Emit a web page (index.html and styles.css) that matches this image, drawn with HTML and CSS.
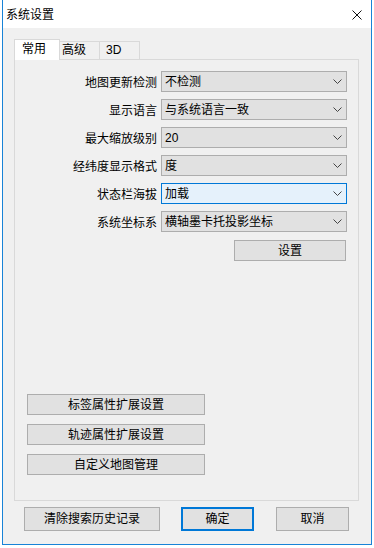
FILE: index.html
```html
<!DOCTYPE html>
<html>
<head>
  <meta name="viewport" content="width=device-width, initial-scale=1.0">
  <title>系统设置</title>
  <link rel="stylesheet" href="styles.css">
</head>
<body>

  <div class="window">
    <div class="titlebar">
      <span class="title">系统设置</span>
      <svg class="close" width="10" height="10" viewBox="0 0 10 10">
        <path d="M0.5 0.5 L9.5 9.5 M9.5 0.5 L0.5 9.5" stroke="#111" stroke-width="1" fill="none"/>
      </svg>
    </div>

    <div class="client">
      <!-- tabs -->
      <div class="tabs">
        <div class="tab active">常用</div>
        <div class="tab t2">高级</div>
        <div class="tab t3">3D</div>
      </div>

      <div class="panel">
        <div class="form">
          <div class="row">
            <span class="label">地图更新检测</span>
            <div class="combo"><span class="val">不检测</span><svg class="arrow" width="9" height="5"><polyline points="0.5,0.5 4.5,4.5 8.5,0.5" fill="none" stroke="#444"/></svg></div>
          </div>
          <div class="row">
            <span class="label">显示语言</span>
            <div class="combo"><span class="val">与系统语言一致</span><svg class="arrow" width="9" height="5"><polyline points="0.5,0.5 4.5,4.5 8.5,0.5" fill="none" stroke="#444"/></svg></div>
          </div>
          <div class="row">
            <span class="label">最大缩放级别</span>
            <div class="combo"><span class="val">20</span><svg class="arrow" width="9" height="5"><polyline points="0.5,0.5 4.5,4.5 8.5,0.5" fill="none" stroke="#444"/></svg></div>
          </div>
          <div class="row">
            <span class="label">经纬度显示格式</span>
            <div class="combo"><span class="val">度</span><svg class="arrow" width="9" height="5"><polyline points="0.5,0.5 4.5,4.5 8.5,0.5" fill="none" stroke="#444"/></svg></div>
          </div>
          <div class="row">
            <span class="label">状态栏海拔</span>
            <div class="combo focus"><span class="val">加载</span><svg class="arrow" width="9" height="5"><polyline points="0.5,0.5 4.5,4.5 8.5,0.5" fill="none" stroke="#444"/></svg></div>
          </div>
          <div class="row">
            <span class="label">系统坐标系</span>
            <div class="combo"><span class="val">横轴墨卡托投影坐标</span><svg class="arrow" width="9" height="5"><polyline points="0.5,0.5 4.5,4.5 8.5,0.5" fill="none" stroke="#444"/></svg></div>
          </div>
        </div>

        <button class="btn set">设置</button>

        <div class="ext">
          <button class="btn wide">标签属性扩展设置</button>
          <button class="btn wide">轨迹属性扩展设置</button>
          <button class="btn wide">自定义地图管理</button>
        </div>
      </div>

      <div class="footer">
        <button class="btn clear">清除搜索历史记录</button>
        <button class="btn ok">确定</button>
        <button class="btn cancel">取消</button>
      </div>
    </div>
  </div>

</body>
</html>
```

FILE: styles.css
```css
* { box-sizing: border-box; }
body {
  margin: 0;
  background-color: #fff;
  font-family: "Liberation Sans", "Noto Sans CJK SC", sans-serif;
  font-size: 12px;
  color: #000;
}
.window {
  width: 370px;
  height: 545px;
  margin-left: 2px;
  border: 1px solid #1883d7;
  border-top: none;
  display: flex;
  flex-direction: column;
}
.titlebar {
  height: 28px;
  background-color: #fff;
  display: flex;
  align-items: center;
  padding-left: 3px;
}
.title {
  line-height: 14px;
  margin-top: 2px;
}
.close {
  margin-left: auto;
  margin-right: 9px;
  margin-top: 2px;
}
.client {
  flex: 1;
  background-color: #f0f0f0;
  padding: 11px 12px 0 11px;
}
.tabs {
  display: flex;
  align-items: flex-end;
  height: 20px;
}
.tab {
  height: 18px;
  width: 41px;
  margin-left: -1px;
  border: 1px solid #d9d9d9;
  border-bottom: none;
  background-color: #f0f0f0;
  line-height: 17px;
}
.tab.active {
  position: relative;
  z-index: 1;
  width: 46px;
  height: 21px;
  margin-left: 0;
  margin-bottom: -1px;
  background-color: #fff;
  padding-left: 7px;
  line-height: 19px;
}
.tab.t2 { padding-left: 2px; }
.tab.t3 { padding-left: 6px; }
.panel {
  height: 442px;
  border: 1px solid #d9d9d9;
  background-color: #f0f0f0;
  padding: 11px 0 25px 0;
  display: flex;
  flex-direction: column;
}
.form {
  display: flex;
  flex-direction: column;
  gap: 7px;
}
.row {
  display: flex;
  align-items: center;
  gap: 4px;
  height: 21px;
}
.label {
  width: 142px;
  text-align: right;
  white-space: nowrap;
}
.combo {
  width: 186px;
  height: 21px;
  border: 1px solid #adadad;
  background-color: #e1e1e1;
  display: flex;
  align-items: center;
  padding-left: 3px;
  padding-right: 4px;
}
.combo.focus {
  border-color: #0078d7;
  background-color: #e5f1fb;
}
.val { flex: 1; line-height: 14px; }
.arrow { display: block; }
.btn {
  font-family: inherit;
  font-size: 12px;
  color: #000;
  background-color: #e1e1e1;
  border: 1px solid #adadad;
  padding: 0;
  height: 21px;
  line-height: 14px;
}
.set {
  width: 112px;
  margin-top: 8px;
  margin-left: 219px;
}
.ext {
  margin-top: auto;
  margin-left: 12px;
  display: flex;
  flex-direction: column;
  gap: 9px;
}
.wide { width: 178px; }
.footer {
  display: flex;
  margin-top: 6px;
  padding-left: 10px;
}
.footer .btn { height: 24px; }
.clear { width: 136px; }
.ok {
  width: 73px;
  margin-left: 21px;
  border: 2px solid #0078d7;
}
.cancel {
  width: 73px;
  margin-left: 22px;
}
```
